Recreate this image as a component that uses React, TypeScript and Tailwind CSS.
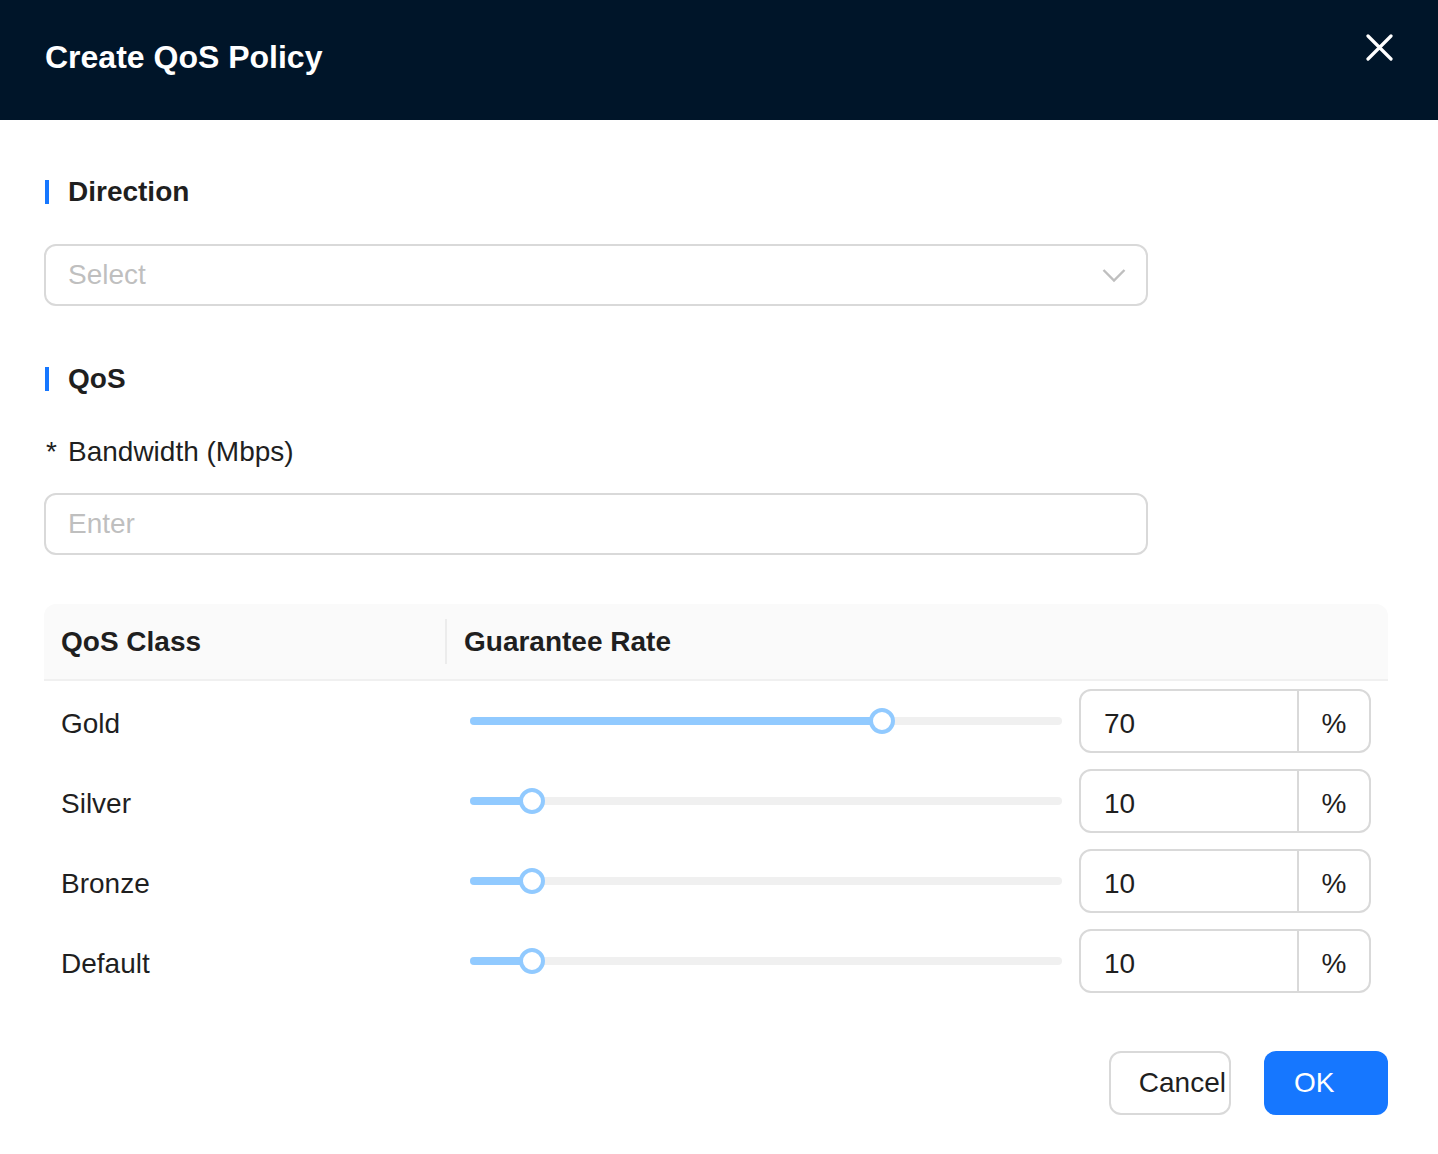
import React from "react";

const font = { fontFamily: '"Liberation Sans", Arial, sans-serif' };

const classes = [
  { name: "Gold", value: 70 },
  { name: "Silver", value: 10 },
  { name: "Bronze", value: 10 },
  { name: "Default", value: 10 },
];

function SectionTitle({ children }: { children: React.ReactNode }) {
  return (
    <div className="flex h-[28px] items-center">
      <span className="ml-[1px] h-[24px] w-[4px] bg-[#1677ff]" />
      <span className="ml-[19px] text-[28px] font-bold leading-none text-[#1f1f1f]">
        {children}
      </span>
    </div>
  );
}

function RateSlider({ value }: { value: number }) {
  // handle centre in px along the 592px track
  const pos = 4 + value * 5.83;
  return (
    <div className="relative h-[26px] w-[592px]">
      <div className="absolute left-0 right-0 top-[9px] h-[8px] rounded-full bg-[#f0f0f0]" />
      <div
        className="absolute left-0 top-[9px] h-[8px] rounded-full bg-[#91caff]"
        style={{ width: pos }}
      />
      <div
        className="absolute top-0 h-[26px] w-[26px] -translate-x-1/2 rounded-full border-[4px] border-[#91caff] bg-white"
        style={{ left: pos }}
      />
    </div>
  );
}

export default function App() {
  return (
    <div className="min-h-[1154px] w-[1438px] bg-white" style={font}>
      {/* Header */}
      <div className="relative flex h-[120px] items-center bg-[#001529] px-[45px] pb-[6px]">
        <h1 className="text-[32px] font-bold leading-none text-white">Create QoS Policy</h1>
        <svg
          className="absolute left-[1366px] top-[34px]"
          width="27"
          height="27"
          viewBox="0 0 27 27"
          fill="none"
          stroke="white"
          strokeWidth="3.2"
          strokeLinecap="round"
        >
          <path d="M2 2L25 25M25 2L2 25" />
        </svg>
      </div>

      <div className="px-[44px] pt-[58px]">
        <SectionTitle>Direction</SectionTitle>

        {/* Direction select */}
        <div className="mt-[38px] flex h-[62px] w-[1104px] items-center justify-between rounded-[12px] border-2 border-[#d9d9d9] pl-[22px] pr-[20px]">
          <span className="text-[28px] text-[#bfbfbf]">Select</span>
          <svg width="24" height="18" viewBox="0 0 24 18" fill="none" stroke="#bfbfbf" strokeWidth="2.4">
            <path d="M1.5 4L12 14.5L22.5 4" />
          </svg>
        </div>

        <div className="mt-[59px]">
          <SectionTitle>QoS</SectionTitle>
        </div>

        <div className="mt-[43px] flex h-[32px] items-center text-[28px] text-[#1f1f1f]">
          <span className="ml-[2px] w-[22px]">*</span>
          <span>Bandwidth (Mbps)</span>
        </div>

        {/* Bandwidth input */}
        <div className="mt-[25px] flex h-[62px] w-[1104px] items-center rounded-[12px] border-2 border-[#d9d9d9] pl-[22px]">
          <span className="text-[28px] text-[#bfbfbf]">Enter</span>
        </div>

        {/* Rate table */}
        <div className="mt-[49px] w-[1344px]">
          <div className="flex h-[77px] items-center rounded-t-[12px] border-b-2 border-[#f0f0f0] bg-[#fafafa] text-[28px] font-bold text-[#1f1f1f]">
            <div className="w-[401px] pl-[17px]">QoS Class</div>
            <div className="h-[45px] w-[2px] bg-[#ececec]" />
            <div className="pl-[17px]">Guarantee Rate</div>
          </div>
          {classes.map((c) => (
            <div key={c.name} className="flex h-[80px] items-center">
              <div className="w-[426px] pl-[17px] pt-[6px] text-[28px] text-[#1f1f1f]">{c.name}</div>
              <RateSlider value={c.value} />
              <div className="ml-[17px] flex h-[64px] w-[292px] rounded-[12px] border-2 border-[#d9d9d9] text-[28px] text-[#1f1f1f]">
                <div className="flex flex-1 items-center pl-[23px] pt-[6px]">{c.value}</div>
                <div className="w-[2px] bg-[#d9d9d9]" />
                <div className="flex w-[70px] items-center justify-center pt-[6px]">%</div>
              </div>
            </div>
          ))}
        </div>

        {/* Footer */}
        <div className="mt-[50px] flex w-[1344px] justify-end gap-[33px]">
          <button className="flex h-[64px] w-[122px] items-center justify-end rounded-[12px] border-2 border-[#d9d9d9] bg-white pr-[3px] text-[28px] text-[#1f1f1f]">
            Cancel
          </button>
          <button className="flex h-[64px] w-[124px] items-center rounded-[12px] bg-[#1677ff] pl-[30px] text-[28px] text-white">
            OK
          </button>
        </div>
      </div>
    </div>
  );
}
